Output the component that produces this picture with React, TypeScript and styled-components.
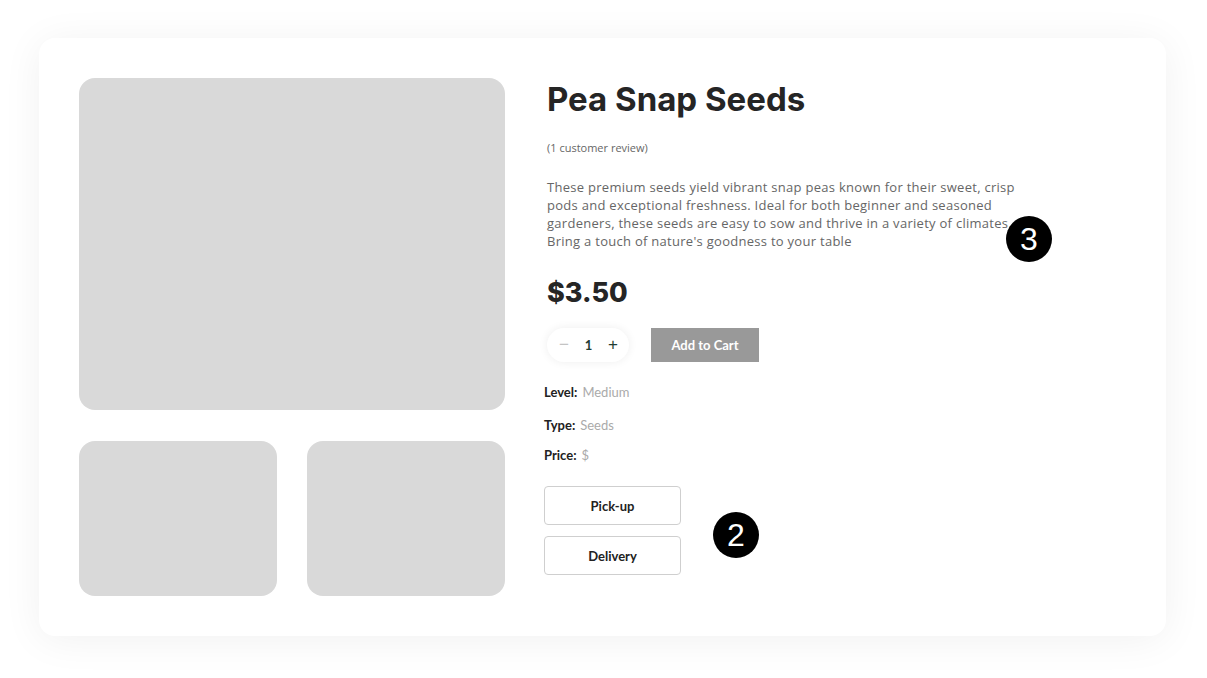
import React, { useState } from "react";
import styled, { createGlobalStyle } from "styled-components";

const Global = createGlobalStyle`
  html, body { margin: 0; padding: 0; background: #ffffff; }
  * { box-sizing: border-box; }
`;

const Page = styled.div`
  padding: 38px 41px 43px 39px;
  background: #ffffff;
`;

const Card = styled.div`
  position: relative;
  display: grid;
  grid-template-columns: 426px 1fr;
  column-gap: 42px;
  padding: 40px 40px 40px 40px;
  background: #ffffff;
  border-radius: 16px;
  box-shadow: 0 4px 40px rgba(0, 0, 0, 0.06);
`;

const Gallery = styled.div`
  display: flex;
  flex-direction: column;
  gap: 31px;
`;

const Placeholder = styled.div<{ $h: number }>`
  height: ${(p) => p.$h}px;
  background: #d9d9d9;
  border-radius: 16px;
`;

const Thumbs = styled.div`
  display: grid;
  grid-template-columns: 1fr 1fr;
  column-gap: 30px;
`;

const Info = styled.div`
  display: flex;
  flex-direction: column;
  align-items: flex-start;
`;

const Title = styled.h1`
  margin: 1px 0 0 0;
  font-family: Inter, "Liberation Sans", sans-serif;
  font-weight: 700;
  font-size: 33px;
  line-height: 40px;
  color: #252525;
  letter-spacing: 0;
`;

const Review = styled.div`
  margin-top: 21px;
  font-family: "Open Sans", sans-serif;
  font-size: 11px;
  line-height: 16px;
  color: #666;
`;

const Description = styled.p`
  margin: 22px 0 0 0;
  width: 476px;
  font-family: "Open Sans", sans-serif;
  font-size: 13px;
  line-height: 18px;
  letter-spacing: 0.28px;
  color: #666;
`;

const Price = styled.div`
  margin-top: 26px;
  font-family: Inter, "Liberation Sans", sans-serif;
  font-weight: 800;
  font-size: 27px;
  line-height: 34px;
  color: #252525;
`;

const BuyRow = styled.div`
  margin-top: 18px;
  display: flex;
  align-items: center;
  gap: 22px;
`;

const Qty = styled.div`
  width: 82px;
  height: 34px;
  border-radius: 17px;
  background: #ffffff;
  box-shadow: 0 0 10px rgba(0, 0, 0, 0.07);
  display: flex;
  align-items: center;
  justify-content: space-between;
  padding: 0 10px 0 11px;
  font-family: Lato, sans-serif;
`;

const QtyBtn = styled.button<{ $muted?: boolean }>`
  border: 0;
  background: none;
  padding: 0;
  width: 12px;
  font-size: 17px;
  line-height: 16px;
  color: ${(p) => (p.$muted ? "#c4c4c4" : "#1f3d33")};
  cursor: pointer;
  display: flex;
  align-items: center;
  justify-content: center;
`;

const QtyValue = styled.span`
  font-size: 13px;
  font-weight: 700;
  color: #1f3d33;
`;

const CartButton = styled.button`
  width: 108px;
  height: 34px;
  border: 0;
  background: #999999;
  color: #ffffff;
  font-family: Lato, sans-serif;
  font-weight: 700;
  font-size: 13px;
`;

const Meta = styled.div`
  margin-top: 21px;
  margin-left: -3px;
  display: flex;
  flex-direction: column;
`;

const MetaRow = styled.div<{ $gap: number }>`
  margin-top: ${(p) => p.$gap}px;
  display: flex;
  align-items: baseline;
  gap: 5px;
  font-family: Lato, sans-serif;
  line-height: 18px;
`;

const MetaLabel = styled.span`
  font-size: 13px;
  font-weight: 700;
  color: #222;
`;

const MetaValue = styled.span`
  font-size: 13px;
  color: #aaaaaa;
`;

const Options = styled.div`
  margin-top: 22px;
  margin-left: -3px;
  display: flex;
  flex-direction: column;
  gap: 11px;
`;

const OptionButton = styled.button`
  width: 137px;
  height: 39px;
  border: 1px solid #cfcfcf;
  border-radius: 4px;
  background: #ffffff;
  font-family: Lato, sans-serif;
  font-weight: 700;
  font-size: 13px;
  color: #222;
`;

const Badge = styled.div<{ $x: number; $y: number }>`
  position: absolute;
  left: ${(p) => p.$x}px;
  top: ${(p) => p.$y}px;
  width: 46px;
  height: 46px;
  border-radius: 50%;
  background: #000;
  color: #fff;
  display: flex;
  align-items: center;
  justify-content: center;
  font-family: "Liberation Sans", Arial, sans-serif;
  font-size: 32px;
  font-weight: 400;
`;

export default function App() {
  const [qty, setQty] = useState(1);
  return (
    <Page>
      <Global />
      <Card>
        <Gallery>
          <Placeholder $h={332} />
          <Thumbs>
            <Placeholder $h={155} />
            <Placeholder $h={155} />
          </Thumbs>
        </Gallery>
        <Info>
          <Title>Pea Snap Seeds</Title>
          <Review>(1 customer review)</Review>
          <Description>
            These premium seeds yield vibrant snap peas known for their sweet, crisp pods and
            exceptional freshness. Ideal for both beginner and seasoned gardeners, these seeds are
            easy to sow and thrive in a variety of climates. Bring a touch of nature's goodness to
            your table
          </Description>
          <Price>$3.50</Price>
          <BuyRow>
            <Qty>
              <QtyBtn $muted onClick={() => setQty(Math.max(1, qty - 1))}>−</QtyBtn>
              <QtyValue>{qty}</QtyValue>
              <QtyBtn onClick={() => setQty(qty + 1)}>+</QtyBtn>
            </Qty>
            <CartButton>Add to Cart</CartButton>
          </BuyRow>
          <Meta>
            <MetaRow $gap={0}>
              <MetaLabel>Level:</MetaLabel>
              <MetaValue>Medium</MetaValue>
            </MetaRow>
            <MetaRow $gap={15}>
              <MetaLabel>Type:</MetaLabel>
              <MetaValue>Seeds</MetaValue>
            </MetaRow>
            <MetaRow $gap={12}>
              <MetaLabel>Price:</MetaLabel>
              <MetaValue>$</MetaValue>
            </MetaRow>
          </Meta>
          <Options>
            <OptionButton>Pick-up</OptionButton>
            <OptionButton>Delivery</OptionButton>
          </Options>
        </Info>
        <Badge $x={967} $y={178}>3</Badge>
        <Badge $x={674} $y={474}>2</Badge>
      </Card>
    </Page>
  );
}
